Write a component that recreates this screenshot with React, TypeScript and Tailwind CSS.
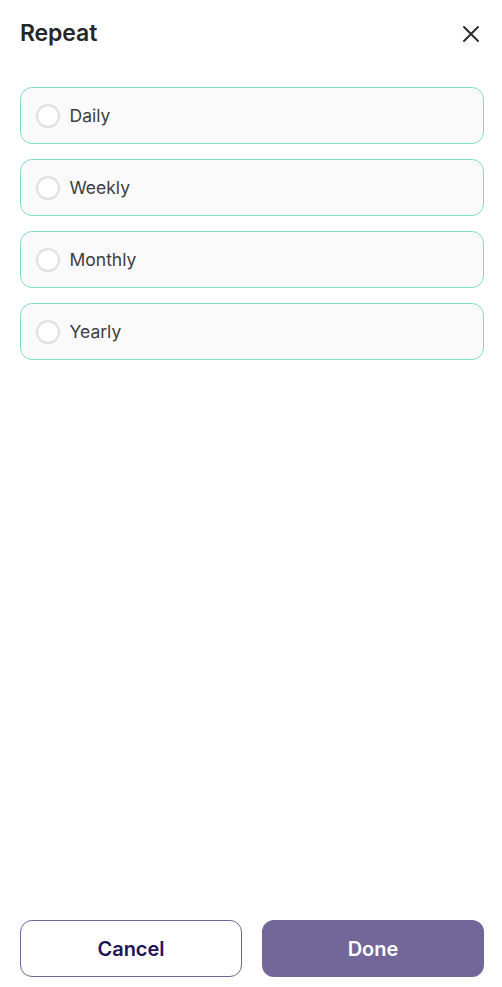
import { useState } from "react";

const OPTIONS = ["Daily", "Weekly", "Monthly", "Yearly"];

function CloseIcon() {
  return (
    <svg width="18" height="18" viewBox="0 0 18 18" fill="none" stroke="#2b2b2b" strokeWidth="2" strokeLinecap="round">
      <path d="M2 2l14 14M16 2L2 16" />
    </svg>
  );
}

export default function App() {
  const [selected, setSelected] = useState<string | null>(null);

  return (
    <div
      className="flex h-[987px] w-full flex-col bg-white pl-5 pr-[18px]"
      style={{ fontFamily: "Inter, 'Noto Sans', sans-serif" }}
    >
      <div className="flex h-[66px] items-center justify-between pt-px">
        <h1 className="text-[23px] font-semibold tracking-[-0.1px] text-[#262626]">Repeat</h1>
        <button type="button" className="mr-[1px] flex h-6 w-6 items-center justify-center">
          <CloseIcon />
        </button>
      </div>

      <div className="mt-[21px] flex flex-col gap-[15px]">
        {OPTIONS.map((opt) => (
          <button
            key={opt}
            type="button"
            onClick={() => setSelected(opt)}
            className="flex h-[57px] w-full items-center gap-[10px] rounded-[12px] border-[1.5px] border-[#7fe0c2] bg-[#fafafa] pl-[14.5px] pt-px text-left"
          >
            <span className="flex h-[24px] w-[24px] items-center justify-center rounded-full border-2 border-[#dde0e4] bg-white">
              {selected === opt && <span className="h-3 w-3 rounded-full bg-[#736699]" />}
            </span>
            <span className="text-[17.5px] text-[#3d3d3d]">{opt}</span>
          </button>
        ))}
      </div>

      <div className="mt-auto mb-[10px] grid grid-cols-2 gap-5">
        <button
          type="button"
          className="h-[57px] rounded-[12px] border border-[#6f6496] bg-white text-[20px] font-semibold text-[#1f1457]"
        >
          Cancel
        </button>
        <button
          type="button"
          className="h-[57px] rounded-[12px] bg-[#736699] text-[20px] font-semibold text-white"
        >
          Done
        </button>
      </div>
    </div>
  );
}
